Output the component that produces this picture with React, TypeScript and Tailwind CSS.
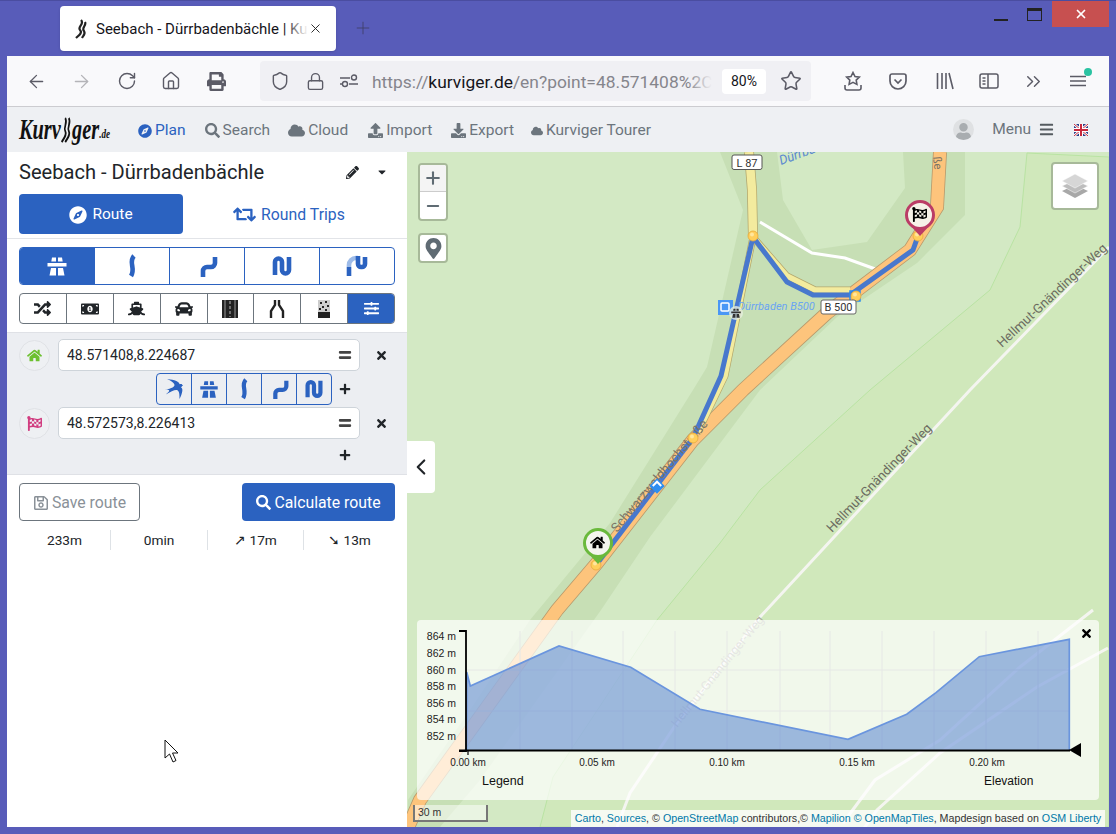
import { ReactNode } from 'react'
import { ArrowLeft, ArrowRight, RotateCw, Home, Shield, Lock, Star, X, Plus, Minus, ChevronLeft, ChevronsRight } from 'lucide-react'
import {
  FaCompass, FaSearch, FaCloud, FaUpload, FaDownload, FaBars, FaPencilAlt, FaRetweet, FaRandom,
  FaMoneyBillAlt, FaShip, FaCar, FaSlidersH, FaHome, FaFlagCheckered, FaTimes, FaPlus, FaEquals,
  FaPrint, FaMapMarkerAlt, FaCaretDown, FaRegSave, FaUser,
} from 'react-icons/fa'
import { GiSwallow } from 'react-icons/gi'

function Motorway({ size = 20 }: { size?: number }) {
  return (
    <svg width={size} height={size} viewBox="0 0 24 24" fill="currentColor">
      <path d="M7 3.500h4v4H6.300zM13 3.500h4l.7 4H13zM2.500 9h19v3.500h-19zM6 14h5v7.500H4.500zM13 14h5l1.500 7.500H13z" />
    </svg>
  )
}

function Curve({ d, size = 20, width = 4.600 }: { d: string; size?: number; width?: number }) {
  return (
    <svg width={size} height={size} viewBox="0 0 24 24" fill="none" stroke="currentColor" strokeWidth={width}>
      <path d={d} />
    </svg>
  )
}

const CURVE_1 = 'M14 2 C8 8 16 14 11 22'
const CURVE_2 = 'M20 3 v6 a4 4 0 0 1 -4 4 h-4 a4 4 0 0 0 -4 4 v6'
const CURVE_3 = 'M5 21 V8 a3.500 3.500 0 0 1 7 0 v8 a3.500 3.500 0 0 0 7 0 V3'

function CurveExtreme() {
  return (
    <svg width="24" height="24" viewBox="0 0 24 24" fill="none" strokeWidth="4.600">
      <path d="M4 22 V13" stroke="#2b62c0" />
      <path d="M4 13 V11 a7 7 0 0 1 7-7 h2" stroke="#9dbbe8" />
      <path d="M13 2 v8 a3 3 0 0 0 3 3 h1 a3 3 0 0 0 3-3 V3" stroke="#2b62c0" />
    </svg>
  )
}

function TunnelRoad() {
  return (
    <svg width="18" height="18" viewBox="0 0 18 18">
      <rect x="1" y="0" width="16" height="18" fill="#222" />
      <rect x="3.500" width="1" height="18" fill="#999" />
      <rect x="13.500" width="1" height="18" fill="#999" />
      <path d="M9 1v16" stroke="#bbb" strokeWidth="1" strokeDasharray="3 2" />
    </svg>
  )
}

function NarrowRoad() {
  return (
    <svg width="18" height="18" viewBox="0 0 18 18" fill="none" stroke="#222" strokeWidth="2.400">
      <path d="M7 0v5L3 11v7M11 0v5l4 6v7" />
    </svg>
  )
}

function UnpavedRoad() {
  return (
    <svg width="16" height="18" viewBox="0 0 16 18">
      <rect x="2" y="0" width="12" height="12" fill="#ccc" />
      <rect x="2" y="12" width="12" height="6" fill="#222" />
      <path d="M4 2h2v2H4zM9 1h2v2H9zM6 6h2v2H6zM11 5h2v2h-2zM3 8h2v2H3zM9 9h2v2H9z" fill="#222" />
    </svg>
  )
}

function LogoSwirl() {
  return (
    <svg width="20" height="28" viewBox="0 0 16 26" fill="none" stroke="#111" strokeWidth="2.400">
      <path d="M6 1 C10 6 3 10 6 14 C9 18 3 22 1 25" />
      <path d="M11 1 C15 6 8 10 11 14 C14 18 8 22 6 25" />
    </svg>
  )
}

function Favicon() {
  return (
    <svg width="14" height="20" viewBox="0 0 14 20" fill="none" stroke="#222" strokeWidth="2.200">
      <path d="M7 1 C11 5 3 8 6 11 C9 14 4 17 2 19" />
      <path d="M11 3 C13 6 7 9 10 12 C12 15 9 17 8 19" />
    </svg>
  )
}

function ToolbarIcon({ children, className = '' }: { children: ReactNode; className?: string }) {
  return <div className={`flex h-[30px] w-[30px] items-center justify-center text-[#5b5b66] ${className}`}>{children}</div>
}

function BrowserChrome() {
  return (
    <>
      <div className="relative flex h-[55px] shrink-0 items-start">
        <div className="ml-[53px] mt-[5px] flex h-[45px] w-[276px] items-center rounded-[4px] bg-white pl-[14px] shadow-sm">
          <Favicon />
          <div className="relative ml-[8px] w-[212px] overflow-hidden whitespace-nowrap pt-[1px] text-[15px] text-[#15141a]">
            Seebach - Dürrbadenbächle | Kurviger
            <div className="absolute inset-y-0 right-0 w-[24px] bg-gradient-to-r from-transparent to-white" />
          </div>
          <X size={15} strokeWidth={1.500} className="text-[#222]" />
        </div>
        <Plus size={20} strokeWidth={1} className="ml-[17px] mt-[17px] text-[#3e3e66]" />
        <div className="ml-auto flex h-[26px] items-start">
          <div className="mr-[19px] mt-[18px] h-[2px] w-[14px] bg-[#222]" />
          <div className="mr-[10px] mt-[7px] h-[13px] w-[15px] border border-t-[3px] border-[#222]" />
          <div className="flex h-[26px] w-[57px] items-center justify-center bg-[#c75050]">
            <X size={14} strokeWidth={3} className="text-white" />
          </div>
        </div>
      </div>
      <div className="flex h-[51px] shrink-0 items-center border-b border-[#ccccd0] bg-[#f9f9fb] pl-[14px]">
        <ToolbarIcon><ArrowLeft size={21} strokeWidth={1.500} /></ToolbarIcon>
        <ToolbarIcon className="ml-[15px] !text-[#b4b4b8]"><ArrowRight size={21} strokeWidth={1.500} /></ToolbarIcon>
        <ToolbarIcon className="ml-[16px]"><RotateCw size={20} strokeWidth={1.700} /></ToolbarIcon>
        <ToolbarIcon className="ml-[14px]"><Home size={20} strokeWidth={1.700} /></ToolbarIcon>
        <ToolbarIcon className="ml-[15px]"><FaPrint size={19} /></ToolbarIcon>
        <div className="ml-[29px] flex h-[40px] w-[551px] items-center rounded-[4px] bg-[#f0f0f4] pl-[5px]">
          <ToolbarIcon><Shield size={20} strokeWidth={1.700} /></ToolbarIcon>
          <ToolbarIcon className="ml-[5px]"><Lock size={19} strokeWidth={1.700} /></ToolbarIcon>
          <ToolbarIcon className="ml-[4px]">
            <svg width="18" height="14" viewBox="0 0 18 14" fill="none" stroke="currentColor" strokeWidth="1.400">
              <path d="M0 4h10M0 10h2M9 10h9" />
              <circle cx="14" cy="3.500" r="2.500" />
              <circle cx="5" cy="10" r="2.500" />
            </svg>
          </ToolbarIcon>
          <div className="relative ml-[8px] w-[340px] overflow-hidden whitespace-nowrap pt-[2px] text-[17.400px] text-[#85858c]">
            https://<span className="text-[#15141a]">kurviger.de</span>/en?point=48.571408%2C
            <div className="absolute inset-y-0 right-0 w-[24px] bg-gradient-to-r from-transparent to-[#f0f0f4]" />
          </div>
          <div className="ml-[10px] flex h-[25px] w-[44px] items-center justify-center rounded-[4px] bg-white text-[14px] text-[#15141a]">80%</div>
          <ToolbarIcon className="ml-[10px]"><Star size={22} strokeWidth={1.700} /></ToolbarIcon>
        </div>
        <ToolbarIcon className="ml-[27px]">
          <svg width="18" height="20" viewBox="0 0 18 20" fill="none" stroke="currentColor" strokeWidth="1.600">
            <path d="M9 1.500l2 4 4.300.6-3.100 3 .7 4.300L9 11.400l-3.900 2 .7-4.300-3.100-3 4.300-.6z" />
            <path d="M1 14v3a2 2 0 0 0 2 2h12a2 2 0 0 0 2-2v-3" />
          </svg>
        </ToolbarIcon>
        <ToolbarIcon className="ml-[15px]">
          <svg width="18" height="17" viewBox="0 0 18 17" fill="none" stroke="currentColor" strokeWidth="1.700">
            <path d="M1 3a2 2 0 0 1 2-2h12a2 2 0 0 1 2 2v5a8 8 0 0 1-16 0z" />
            <path d="M5.500 6.500L9 10l3.500-3.500" />
          </svg>
        </ToolbarIcon>
        <ToolbarIcon className="ml-[17px]">
          <svg width="18" height="18" viewBox="0 0 18 18" fill="none" stroke="currentColor" strokeWidth="1.600">
            <path d="M1.500 1v16M6 1v16M10 1v16M13 1l4 16" />
          </svg>
        </ToolbarIcon>
        <ToolbarIcon className="ml-[14px]">
          <svg width="20" height="16" viewBox="0 0 20 16" fill="none" stroke="currentColor" strokeWidth="1.500">
            <rect x="1" y="1" width="18" height="14" rx="2" />
            <path d="M9 1v14M3.500 5h3M3.500 8h3M3.500 11h3" />
          </svg>
        </ToolbarIcon>
        <ToolbarIcon className="ml-[14px]"><ChevronsRight size={23} strokeWidth={1.500} /></ToolbarIcon>
        <ToolbarIcon className="relative ml-[15px]">
          <svg width="16" height="12" viewBox="0 0 16 12" fill="none" stroke="currentColor" strokeWidth="1.500">
            <path d="M0 1.500h16M0 6h16M0 10.500h16" />
          </svg>
          <div className="absolute right-[1px] top-[2px] h-[8px] w-[8px] rounded-full bg-[#2ac3a2]" />
        </ToolbarIcon>
      </div>
    </>
  )
}

function NavLink({ icon, label, className = '', active = false }: { icon: ReactNode; label: string; className?: string; active?: boolean }) {
  return (
    <div className={`flex items-center gap-[3px] pt-[2px] text-[15.500px] ${active ? 'text-[#2b62c0]' : 'text-[#6c757d]'} ${className}`}>
      {icon}
      <span>{label}</span>
    </div>
  )
}

function AppNav() {
  return (
    <div className="flex h-[45px] shrink-0 items-center bg-[#eef0f3] pl-[12px]">
      <div className="w-[92px]">
        <div className="flex w-[130px] origin-left scale-x-[0.7] items-center font-['Liberation_Serif',serif] text-[29px] font-bold italic text-[#111]">
          <span>Kurv</span>
          <LogoSwirl />
          <span>ger</span>
          <span className="mt-[8px] text-[13px]">.de</span>
        </div>
      </div>
      <NavLink className="ml-[27px]" active icon={<FaCompass size={14} />} label="Plan" />
      <NavLink className="ml-[19px]" icon={<FaSearch size={15} />} label="Search" />
      <NavLink className="ml-[18px]" icon={<FaCloud size={17} />} label="Cloud" />
      <NavLink className="ml-[20px]" icon={<FaUpload size={15} />} label="Import" />
      <NavLink className="ml-[19px]" icon={<FaDownload size={15} />} label="Export" />
      <NavLink className="ml-[17px]" icon={<FaCloud size={12} />} label="Kurviger Tourer" />
      <div className="ml-auto flex h-[21px] w-[21px] items-end justify-center overflow-hidden rounded-full bg-[#dfe1e3] text-[#a9adb0]">
        <FaUser size={17} />
      </div>
      <div className="ml-[18px] flex items-center gap-[8px] text-[15.500px] text-[#6c757d]">
        Menu <FaBars size={15} className="text-[#555b60]" />
      </div>
      <svg width="14" height="12" viewBox="0 0 14 12" className="ml-[20px] mr-[21px]">
        <rect width="14" height="12" fill="#2a3f88" />
        <path d="M0 0l14 12M14 0L0 12" stroke="#fff" strokeWidth="2.500" />
        <path d="M0 0l14 12M14 0L0 12" stroke="#c8283c" strokeWidth="1" />
        <path d="M7 0v12M0 6h14" stroke="#fff" strokeWidth="4" />
        <path d="M7 0v12M0 6h14" stroke="#c8283c" strokeWidth="2" />
      </svg>
    </div>
  )
}

const prefCells: { icon: ReactNode; active?: boolean }[] = [
  { icon: <Motorway size={24} />, active: true },
  { icon: <Curve d={CURVE_1} size={24} /> },
  { icon: <Curve d={CURVE_2} size={24} /> },
  { icon: <Curve d={CURVE_3} size={24} /> },
  { icon: <CurveExtreme /> },
]

const avoidCells: { icon: ReactNode; active?: boolean }[] = [
  { icon: <FaRandom size={17} /> },
  { icon: <FaMoneyBillAlt size={18} /> },
  { icon: <FaShip size={17} /> },
  { icon: <FaCar size={18} /> },
  { icon: <TunnelRoad /> },
  { icon: <NarrowRoad /> },
  { icon: <UnpavedRoad /> },
  { icon: <FaSlidersH size={15} />, active: true },
]

const legCells: ReactNode[] = [
  <GiSwallow size={22} />,
  <Motorway size={22} />,
  <Curve d={CURVE_1} size={22} />,
  <Curve d={CURVE_2} size={22} />,
  <Curve d={CURVE_3} size={22} />,
]

function Waypoint({ icon, value }: { icon: ReactNode; value: string }) {
  return (
    <div className="flex items-center">
      <div className="flex h-[31px] w-[31px] items-center justify-center rounded-full border border-[#e0e2e6] bg-[#eef0f3]">{icon}</div>
      <div className="ml-[8px] flex h-[32px] w-[302px] items-center justify-between rounded-[5px] border border-[#ced4da] bg-white pl-[8px] pr-[7px] text-[14px] text-[#212529]">
        <span>{value}</span>
        <FaEquals size={14} className="text-[#444]" />
      </div>
      <FaTimes size={13} className="ml-[15px] text-[#212529]" />
    </div>
  )
}

function Sidebar() {
  return (
    <div className="flex w-[400px] shrink-0 flex-col bg-white text-[#212529]">
      <div className="flex h-[40px] items-center pl-[12px] pr-[19px]">
        <span className="text-[20.100px]">Seebach - Dürrbadenbächle</span>
        <FaPencilAlt size={13} className="ml-auto text-[#212529]" />
        <FaCaretDown size={12} className="ml-[17px]" />
      </div>
      <div className="mt-[2px] flex h-[45px] border-b border-[#e2e4e8] px-[12px] pb-[4px]">
        <div className="flex w-[164px] items-center justify-center gap-[5px] rounded-[4px] bg-[#2b62c0] pt-[1px] text-[15.500px] text-white">
          <FaCompass size={18} /> Route
        </div>
        <div className="flex flex-1 items-center justify-center gap-[5px] pt-[1px] text-[15.800px] text-[#2b62c0]">
          <FaRetweet size={23} /> Round Trips
        </div>
      </div>
      <div className="ml-[12px] mt-[8px] flex h-[38px] w-[376px] overflow-hidden rounded-[4px] border border-[#2b62c0]">
        {prefCells.map((cell, i) => (
          <div key={i} className={`flex flex-1 items-center justify-center border-l border-[#2b62c0] first:border-l-0 ${cell.active ? 'bg-[#2b62c0] text-white' : 'text-[#2b62c0]'}`}>
            {cell.icon}
          </div>
        ))}
      </div>
      <div className="ml-[12px] mt-[8px] flex h-[31px] w-[376px] overflow-hidden rounded-[4px] border border-[#6c757d]">
        {avoidCells.map((cell, i) => (
          <div key={i} className={`flex flex-1 items-center justify-center border-l border-[#6c757d] first:border-l-0 ${cell.active ? 'bg-[#2b62c0] text-white' : 'text-[#212529]'}`}>
            {cell.icon}
          </div>
        ))}
      </div>
      <div className="mt-[8px] h-[143px] border-y border-[#dfe1e6] bg-[#eceef2] pl-[12px] pt-[6px]">
        <Waypoint icon={<FaHome size={15} className="text-[#6cc02f]" />} value="48.571408,8.224687" />
        <div className="flex h-[36px] items-center">
          <div className="ml-[137px] flex h-[32px] w-[176px] overflow-hidden rounded-[4px] border border-[#2b62c0] text-[#2b62c0]">
            {legCells.map((cell, i) => (
              <div key={i} className="flex flex-1 items-center justify-center border-l border-[#2b62c0] first:border-l-0">{cell}</div>
            ))}
          </div>
          <FaPlus size={12} className="ml-[7px]" />
        </div>
        <Waypoint icon={<FaFlagCheckered size={15} className="text-[#d13d80]" />} value="48.572573,8.226413" />
        <div className="flex h-[31px] items-center">
          <FaPlus size={12} className="ml-[320px]" />
        </div>
      </div>
      <div className="mt-[8px] flex justify-between px-[12px]">
        <div className="flex h-[38px] w-[121px] items-center justify-center gap-[3px] rounded-[4px] border border-[#6c757d] pt-[1px] text-[15.800px] text-[#8a9198]">
          <FaRegSave size={16} /> Save route
        </div>
        <div className="flex h-[38px] w-[153px] items-center justify-center gap-[3px] rounded-[4px] bg-[#2b62c0] pt-[1px] text-[15.800px] text-white">
          <FaSearch size={15} /> Calculate route
        </div>
      </div>
      <div className="mt-[8px] flex h-[21px] px-[12px] pt-[1px] text-[13.700px] text-[#212529]">
        <div className="flex w-[92px] items-center justify-center border-r border-[#dee2e6]">233m</div>
        <div className="flex w-[97px] items-center justify-center border-r border-[#dee2e6]">0min</div>
        <div className="flex w-[96px] items-center justify-center border-r border-[#dee2e6]">↗ 17m</div>
        <div className="flex flex-1 items-center justify-center">➘ 13m</div>
      </div>
    </div>
  )
}

const ROUTE = '596,565 693,438 721,376 753,237 787,282 813,295 850,295 913,250 918,236'
const B500 = '406,832 420,800 557,610 597,563 693,440 743,390 827,313 910,250 937,207 940,152'

function MapDrawing() {
  return (
    <svg className="absolute inset-0 h-full w-full" viewBox="407 152 702 675" preserveAspectRatio="none" fontFamily="Roboto, sans-serif">
      <rect x="407" y="152" width="702" height="675" fill="#d3e9c4" />
      <path d="M1027 153L1020 227L990 290L870 390L760 490L720 543L657 620L553 777L540 827H1109V157Z" fill="#d0e8bb" stroke="#b9e3a3" strokeWidth="1" />
      <path d="M720 152L743 210L707 367L693 390L610 523L530 620L470 710L408 800V827H440L480 780L601 610L650 537L760 390L837 317L917 263L965 215V152H903L905 188L867 242L812 250L783 200L777 152Z" fill="#c7dfb5" />

      <polyline points="1109,247 970,390 760,617 677,723 630,793 617,827" fill="none" stroke="#f4f5f0" strokeWidth="3" />
      <polyline points="1108,648 1037,687 940,753 877,810 860,834" fill="none" stroke="#f4f5f0" strokeWidth="3" />
      <polyline points="1093,610 1020,667 940,740 875,780 843,823" fill="none" stroke="#f4f5f0" strokeWidth="3" />
      <polyline points="760,222 812,253 845,258 878,270" fill="none" stroke="#fff" strokeWidth="3" />

      <polyline points={B500} fill="none" stroke="#b89a6c" strokeWidth="14" />
      <polyline points={B500} fill="none" stroke="#fdc47c" strokeWidth="12.400" />

      <polyline points="749,152 752,190 753,237" fill="none" stroke="#b3a76c" strokeWidth="10" />
      <polyline points="749,152 752,190 753,237" fill="none" stroke="#f3eb9e" strokeWidth="8.500" />
      <polyline points="753,237 725,376 698,432" fill="none" stroke="#b3a76c" strokeWidth="7" />
      <polyline points="753,237 725,376 698,432" fill="none" stroke="#f3eb9e" strokeWidth="5.500" />
      <polyline points="753,237 787,276 815,290 850,290" fill="none" stroke="#b3a76c" strokeWidth="7" />
      <polyline points="753,237 787,276 815,290 850,290" fill="none" stroke="#f3eb9e" strokeWidth="5.500" />

      <polyline points={ROUTE} fill="none" stroke="#4878cd" strokeWidth="5" strokeLinejoin="round" />

      <text x="1002" y="348" transform="rotate(-43 1002 348)" fontSize="13" fill="#6b6b60">Hellmut-Gnändinger-Weg</text>
      <text x="832" y="533" transform="rotate(-46 832 533)" fontSize="13" fill="#6b6b60">Hellmut-Gnändinger-Weg</text>
      <text x="677" y="728" transform="rotate(-51 677 728)" fontSize="12.500" fill="#a8aba0">Hellmut-Gnändinger-Weg</text>
      <text x="617" y="533" transform="rotate(-50 617 533)" fontSize="13" fill="#7a7466">Schwarzwaldhochstraße</text>
      <text x="933" y="157" transform="rotate(84 933 157)" fontSize="11.500" fill="#7a7466">ße</text>
      <text x="781" y="165" transform="rotate(-20 781 165)" fontSize="13" fontStyle="italic" fill="#5a88d0">Dürrbach</text>
      <text x="738" y="310" fontSize="11" fontStyle="italic" fill="#6aa5f2">Dürrbaden B500</text>

      <rect x="718" y="300" width="15" height="15" fill="#4a97f5" />
      <rect x="721" y="303" width="8" height="8" rx="1" fill="none" stroke="#fff" strokeWidth="1.500" />
      <circle cx="736" cy="313" r="7" fill="#e6efe0" opacity="0.800" />
      <g transform="translate(730 307) scale(0.5)" fill="#333"><path d="M7 3.500h4v4H6.300zM13 3.500h4l.7 4H13zM2.500 9h19v3.500h-19zM6 14h5v7.500H4.500zM13 14h5l1.500 7.500H13z" /></g>

      <g transform="translate(657 486) rotate(45)">
        <rect x="-5.500" y="-5.500" width="11" height="11" fill="#2f8ef0" />
        <path d="M-3 3V-3H3" fill="none" stroke="#fff" strokeWidth="2" />
      </g>

      <rect x="850" y="291" width="10" height="10" fill="none" stroke="#2a8cf0" strokeWidth="1.500" />
      {[[753, 236], [856, 296], [918, 236], [693, 438], [596, 565]].map(([cx, cy]) => (
        <g key={cx}>
          <circle cx={cx} cy={cy} r="5" fill="#ffcf5c" stroke="#e8ab3a" strokeWidth="0.800" />
          <circle cx={cx - 1} cy={cy - 1.500} r="2" fill="#ffe69e" />
        </g>
      ))}

      <g>
        <path d="M598 564L587 552H609Z" fill="#6ab93c" />
        <circle cx="598" cy="543" r="13.500" fill="#f4f5ef" stroke="#6ab93c" strokeWidth="3" />
      </g>
      <g>
        <path d="M920 236L909 224H931Z" fill="#bb3c66" />
        <circle cx="920" cy="215" r="13.500" fill="#f6f1e8" stroke="#bb3c66" strokeWidth="3" />
      </g>

      <rect x="732" y="155" width="30" height="14.500" rx="2" fill="#fff" stroke="#555" strokeWidth="1" />
      <text x="747" y="166.500" textAnchor="middle" fontSize="11" fill="#333">L 87</text>
      <rect x="821" y="300" width="35" height="14" rx="2" fill="#fff" stroke="#666" strokeWidth="1" />
      <text x="838.500" y="311" textAnchor="middle" fontSize="11" fill="#333">B 500</text>
    </svg>
  )
}

const ELEV_LINE = '466.7,672 470.3,686 559,646 630.7,667.300 700,709.300 848,739.300 906.7,714.300 936,692.700 979.3,656.700 1069.3,639.300'
const Y_LABELS: [string, number][] = [['864 m', 640], ['862 m', 657], ['860 m', 673.5], ['858 m', 690], ['856 m', 707], ['854 m', 723], ['852 m', 740]]
const X_LABELS: [string, number][] = [['0.00 km', 468], ['0.05 km', 597], ['0.10 km', 727], ['0.15 km', 857], ['0.20 km', 987]]

function ElevationChart() {
  const gridX = [520, 572, 623, 675, 727, 780, 830, 882, 934, 986, 1038]
  return (
    <div className="absolute left-[10px] top-[468px] h-[180px] w-[682px] rounded-[4px] bg-white/70">
      <svg className="h-full w-full" viewBox="417 620 682 180" fontFamily="'Liberation Sans', Arial, sans-serif">
        {gridX.map(x => <line key={x} x1={x} x2={x} y1="631" y2="750" stroke="#e6e8e6" strokeWidth="1" />)}
        {[670, 711].map(y => <line key={y} x1="466" x2="1069" y1={y} y2={y} stroke="#e6e8e6" strokeWidth="1" />)}
        <polygon points={`466,750 ${ELEV_LINE} 1069.3,750`} fill="#4878cd" fillOpacity="0.5" />
        <polyline points={`466.5,750 ${ELEV_LINE} 1069.3,750`} fill="none" stroke="#6a95de" strokeWidth="1.700" />
        <path d="M459 631h7v120h-7" fill="none" stroke="#000" strokeWidth="1.800" />
        <line x1="459" x2="1070" y1="750.500" y2="750.500" stroke="#000" strokeWidth="1.800" />
        <line x1="468" x2="468" y1="750" y2="755" stroke="#000" strokeWidth="1.200" />
        <path d="M1081 743V757L1069 750Z" fill="#000" />
        {Y_LABELS.map(([label, y]) => (
          <text key={label} x="456" y={y} textAnchor="end" fontSize="10.500" fill="#222">{label}</text>
        ))}
        {X_LABELS.map(([label, x]) => (
          <text key={label} x={x} y="766" textAnchor="middle" fontSize="10" fill="#222">{label}</text>
        ))}
        <text x="482" y="785" fontSize="12.500" fill="#111">Legend</text>
        <text x="984" y="785" fontSize="12" fill="#111">Elevation</text>
      </svg>
      <FaTimes size={13} className="absolute right-[6px] top-[7px] text-black" />
    </div>
  )
}

function MapPane() {
  return (
    <div className="relative flex-1 overflow-hidden">
      <MapDrawing />
      <div className="absolute left-[11px] top-[11px] flex w-[30px] flex-col overflow-hidden rounded-[4px] border-2 border-[#a7b999] bg-white">
        <div className="flex h-[27px] items-center justify-center border-b border-[#ccc] bg-[#f4f4f4] text-[#5f6b73]"><Plus size={20} strokeWidth={2.500} /></div>
        <div className="flex h-[27px] items-center justify-center text-[#5f6b73]"><Minus size={18} strokeWidth={2.500} /></div>
      </div>
      <div className="absolute left-[11px] top-[81px] flex h-[30px] w-[30px] items-center justify-center rounded-[4px] border-2 border-[#a7b999] bg-white text-[#5f6b73]">
        <FaMapMarkerAlt size={21} />
      </div>
      <div className="absolute right-[10px] top-[10px] flex h-[48px] w-[48px] items-center justify-center rounded-[4px] border-2 border-[#a7b999] bg-white">
        <svg width="28" height="26" viewBox="0 0 28 26">
          <path d="M14 12L27 18L14 25L1 18Z" fill="#a8a8a8" />
          <path d="M14 7L27 13L14 20L1 13Z" fill="#bdbdbd" stroke="#fff" strokeWidth="0.500" />
          <path d="M14 1L27 8L14 15L1 8Z" fill="#d6d6d6" stroke="#fff" strokeWidth="0.500" />
        </svg>
      </div>
      <div className="absolute left-0 top-[289px] flex h-[52px] w-[28px] items-center justify-center rounded-r-[4px] bg-white text-[#212529]">
        <ChevronLeft size={26} strokeWidth={2} />
      </div>
      <FaHome size={15} className="absolute left-[183px] top-[383px] text-black" />
      <FaFlagCheckered size={15} className="absolute left-[505px] top-[55px] text-black" />
      <ElevationChart />
      <div className="absolute bottom-[5px] left-[6px] flex h-[17px] w-[75px] items-center border-x-2 border-b-2 border-[#777] bg-white/50 pl-[3px] font-['Liberation_Sans',sans-serif] text-[10.500px] text-[#333]">
        30 m
      </div>
      <div className="absolute bottom-0 right-[4px] flex h-[17px] w-[534px] items-center justify-center whitespace-nowrap bg-white/80 font-['Liberation_Sans',sans-serif] text-[10.700px] text-[#333]">
        <span className="text-[#0078a8]">Carto</span>,&nbsp;<span className="text-[#0078a8]">Sources</span>, ©&nbsp;
        <span className="text-[#0078a8]">OpenStreetMap</span>&nbsp;contributors,©&nbsp;
        <span className="text-[#0078a8]">Mapilion © OpenMapTiles</span>, Mapdesign based on&nbsp;
        <span className="text-[#0078a8]">OSM Liberty</span>
      </div>
    </div>
  )
}

export default function App() {
  return (
    <div className="relative flex h-[834px] w-[1116px] flex-col overflow-hidden border-t border-[#4a4da0] bg-[#585cb9] px-[7px] pb-[7px] font-['Roboto',sans-serif]">
      <BrowserChrome />
      <AppNav />
      <div className="flex min-h-0 flex-1">
        <Sidebar />
        <MapPane />
      </div>
      <svg width="16" height="25" viewBox="0 0 16 25" className="absolute left-[164px] top-[738px]">
        <path d="M1 1V19L5.500 15L9 23L12 21.500L8.500 14H14Z" fill="#fff" stroke="#111" strokeWidth="1" />
      </svg>
    </div>
  )
}
